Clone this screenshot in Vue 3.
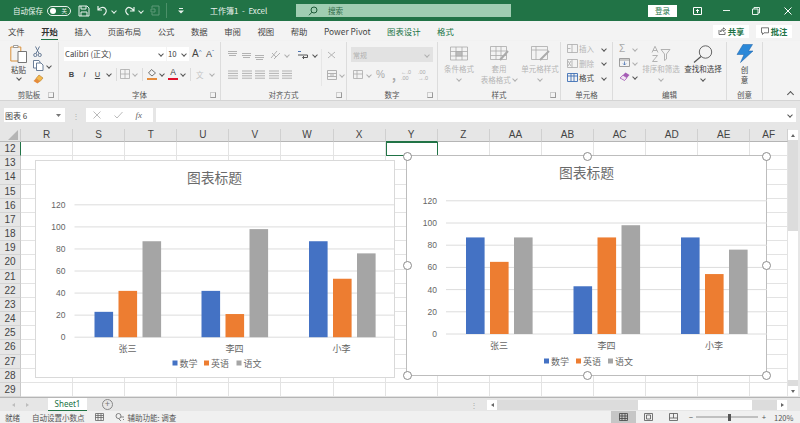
<script setup>
const colNames = ['R', 'S', 'T', 'U', 'V', 'W', 'X', 'Y', 'Z', 'AA', 'AB', 'AC', 'AD', 'AE', 'AF']
const rowNums = Array.from({ length: 18 }, (_, i) => i + 12)

const tabs = [
  { text: '文件' }, { text: '开始', active: true }, { text: '插入' }, { text: '页面布局' }, { text: '公式' },
  { text: '数据' }, { text: '审阅' }, { text: '视图' }, { text: '帮助' }, { text: 'Power Pivot' },
  { text: '图表设计', ctx: true }, { text: '格式', ctx: true },
]

const seriesColors = ['#4472c4', '#ed7d31', '#a5a5a5']
const legendNames = ['数学', '英语', '语文']
const cats = ['张三', '李四', '小李']

const charts = [
  {
    id: 'a', x: 34.5, y: 159.5, w: 360.5, h: 218.5, selected: false,
    titleX: 214, titleY: 182, gridL: 74, gridR: 394, base: 336.7, scale: 1.103, labelX: 65,
    groups: [94, 201, 308.5], catX: [127, 234, 341], catY: 351, legY: 366, legX: [172, 203.5, 236],
    values: [[23, 42, 87], [42, 21, 98], [87, 53, 76]],
  },
  {
    id: 'b', x: 406, y: 154.5, w: 361, h: 221, selected: true,
    titleX: 586.5, titleY: 177, gridL: 446, gridR: 767, base: 333.5, scale: 1.11, labelX: 437,
    groups: [466, 573.5, 681], catX: [499, 606.5, 714], catY: 348.5, legY: 364, legX: [544, 576, 608],
    values: [[87, 65, 87], [43, 87, 98], [87, 54, 76]],
  },
]

const ticks = [0, 20, 40, 60, 80, 100, 120]
const handles = [
  [0, 0], [50, 0], [100, 0], [0, 50], [100, 50], [0, 100], [50, 100], [100, 100],
]
</script>

<template>
  <div class="app">
    <!-- 标题栏 -->
    <header class="titlebar">
      <span class="t-autosave">自动保存</span>
      <span class="toggle"><i class="toggle-dot"></i><b>关</b></span>
      <svg class="t-save" width="12" height="12" viewBox="0 0 12 12" fill="none" stroke="#e8f2ec" stroke-width="1"><path d="M1 1h8l2 2v8H1z" /><path d="M3 1v3h5V1M3 11V7h6v4" /></svg>
      <svg class="t-undo" width="11" height="11" viewBox="0 0 11 11" fill="none" stroke="#e8f2ec" stroke-width="1.2"><path d="M1 1v4h4M1.2 5C3 2.5 6 1.5 8 3.2c2.2 2 1.5 5-1.5 7" /></svg>
      <i class="chev light t-c1"></i>
      <svg class="t-redo" width="11" height="11" viewBox="0 0 11 11" fill="none" stroke="#e8f2ec" stroke-width="1.2"><path d="M10 2v4H6M9.8 6C8 3 5 1.5 3 3.2.8 5.2 1.5 8 4.5 10" /></svg>
      <i class="chev light t-c2"></i>
      <svg class="t-form" width="10" height="11" viewBox="0 0 10 11" fill="none" stroke="#5f9a79" stroke-width="1"><path d="M2 3V1h7v9H2V8M1 4h4v3H1z" /></svg>
      <i class="t-sep"></i>
      <svg class="t-more" width="6" height="6" viewBox="0 0 6 6" fill="#e8f2ec"><path d="M1 0h4v1H1zM0 2.500h6L3 5.500z" /></svg>
      <span class="t-title">工作簿1 &nbsp;-&nbsp; Excel</span>
      <div class="t-search">
        <svg width="10" height="10" viewBox="0 0 10 10" fill="none" stroke="#1d5a38" stroke-width="1"><circle cx="6" cy="4" r="3" /><path d="M4 6.200 1 9.200" /></svg>
        <span>搜索</span>
      </div>
      <button class="t-login">登录</button>
      <svg class="t-win w1" width="9" height="8" viewBox="0 0 9 8" fill="none" stroke="#fff"><path d="M.5.500h8v7h-8zM4.500 6V2.500M3 4l1.500-1.500L6 4" /></svg>
      <i class="t-min"></i>
      <svg class="t-win w3" width="8" height="8" viewBox="0 0 8 8" fill="none" stroke="#e8f2ec"><path d="M.5 2h5.500v5.500H.5zM2 2V.5h5.500V6H6" /></svg>
      <svg class="t-win w4" width="8" height="8" viewBox="0 0 8 8" fill="none" stroke="#fff"><path d="M.5.500l7 7M7.500.500l-7 7" /></svg>
    </header>

    <!-- 选项卡 -->
    <nav class="tabs">
      <span v-for="t in tabs" :key="t.text" class="tab" :class="{ active: t.active, ctx: t.ctx }">{{ t.text }}</span>
      <span class="tab-right">
        <button class="pill">
          <svg width="8" height="8" viewBox="0 0 8 8" fill="none" stroke="#555" stroke-width=".8"><path d="M1 3v4.500h6V5M2.500 5c0-2 1.500-3 3-3V.8L7.700 2.700 5.500 4.500V3.300C4 3.300 3.200 4 2.500 5z" /></svg>
          共享
        </button>
        <button class="pill">
          <svg width="8" height="8" viewBox="0 0 8 8" fill="none" stroke="#555" stroke-width=".8"><path d="M.5.800h7v5H3L1.500 7.500V5.800h-1z" /></svg>
          批注
        </button>
      </span>
    </nav>

    <!-- 功能区 -->
    <section class="ribbon">
      <div class="group g-clip">
        <div class="g-body clip">
          <div class="paste">
            <svg width="17" height="19" viewBox="0 0 17 19" fill="none">
              <path d="M.8 3h10v14H.8z" stroke="#d9913b" stroke-width="1" />
              <path d="M3.500 3.500V1.500H8v2z" stroke="#888" fill="#fff" stroke-width=".8" />
              <path d="M8 7.500h8.500v11H8z" stroke="#666" fill="#fff" stroke-width=".9" />
            </svg>
            <span>粘贴</span>
            <i class="chev"></i>
          </div>
          <div class="clip-side">
            <svg width="9" height="11" viewBox="0 0 9 11" fill="none" stroke="#5a6f8c" stroke-width=".9"><path d="M2.500.500l3.500 7M6.500.500 3 7.500" /><circle cx="2.300" cy="9" r="1.600" /><circle cx="6.700" cy="9" r="1.600" /></svg>
            <span class="ic-row">
              <svg width="11" height="11" viewBox="0 0 11 11" fill="none" stroke="#5a6f8c" stroke-width=".9"><path d="M.5.500h5.500l1 1.500v6H.5z" fill="#fff" /><path d="M3.500 3h4.500l2 2v5.500H3.500z" fill="#fff" /></svg>
              <i class="chev"></i>
            </span>
            <svg width="11" height="10" viewBox="0 0 11 10"><path d="M6 1l4 3-3 3.500-4-3z" fill="#f4b84a" stroke="#b2772a" stroke-width=".6" /><path d="M3 4.500 7 7.500 4.500 9.500.5 7z" fill="#e58b3a" /></svg>
          </div>
        </div>
        <div class="g-label"><span></span><span>剪贴板</span><i class="launch"></i></div>
      </div>

      <div class="group g-font">
        <div class="g-body font">
          <div class="font-row">
            <div class="sel sel-font"><span>Calibri (正文)</span><i class="chev"></i></div>
            <div class="sel sel-size"><span>10</span><i class="chev"></i></div>
            <span class="grow">A<sup>^</sup></span>
            <span class="grow small">A<sup>ˇ</sup></span>
          </div>
          <div class="font-row fr2">
            <b class="fmt">B</b><i class="fmt it">I</i><u class="fmt">U</u><i class="chev"></i>
            <i class="vsep"></i>
            <svg width="10" height="10" viewBox="0 0 10 10" fill="none" stroke="#aaa" stroke-width=".8"><path d="M.5.500h9v9h-9zM5 .5v9M.5 5h9" /></svg>
            <i class="chev gray"></i>
            <i class="vsep"></i>
            <span class="colorbtn">
              <svg width="10" height="8" viewBox="0 0 10 8" fill="none" stroke="#666" stroke-width=".9"><path d="M4.500.500 8.500 4 5 7 1.500 4z" /></svg>
              <i class="bar orange"></i>
            </span>
            <i class="chev"></i>
            <span class="colorbtn"><span class="colorA">A</span><i class="bar red"></i></span>
            <i class="chev"></i>
            <i class="vsep"></i>
            <span class="wen">文</span>
            <i class="chev gray"></i>
          </div>
        </div>
        <div class="g-label"><span></span><span>字体</span><i class="launch"></i></div>
      </div>

      <div class="group g-align">
        <div class="g-body align">
          <div class="al-main">
            <div class="al-row">
              <svg v-for="v in [0, 2, 4]" :key="v" width="9" height="10" viewBox="0 0 9 10" stroke="#aaa" stroke-width=".9"><path :d="`M0 ${v + 1.500}h9M0 ${v + 3.500}h9M1 ${v + 5.500}h7`" /></svg>
              <svg class="orient" width="11" height="10" viewBox="0 0 11 10" fill="none" stroke="#aaa" stroke-width=".9"><path d="M1 8 7 1M4 9l6-6M2 3l4 4" /></svg>
              <i class="chev gray"></i>
              <svg class="wrap" width="11" height="10" viewBox="0 0 11 10" fill="none" stroke-width="1"><path d="M0 1.500h3" stroke="#4a74b4" /><path d="M0 5h9.500v2.500H5" stroke="#555" /><path d="M6 6 4.500 7.500 6 9" stroke="#555" /></svg>
              <i class="chev"></i>
            </div>
            <div class="al-row r2">
              <svg v-for="v in 5" :key="v" width="10" height="9" viewBox="0 0 10 9" stroke="#aaa" stroke-width=".9"><path d="M0 1h10M0 3.400h10M0 5.800h10M0 8.200h10" /></svg>
            </div>
          </div>
          <div class="al-side">
            <svg width="9" height="10" viewBox="0 0 9 10" fill="none" stroke="#b5b5b5"><path d="M1 2 8 8M8 2 1 8" /></svg>
            <span class="ic-row">
              <svg width="10" height="10" viewBox="0 0 10 10" fill="none" stroke="#aaa" stroke-width=".9"><path d="M.5.500h9v9h-9zM.5 3.500h9M.5 6.500h9M3 5h4" /></svg>
              <i class="chev gray"></i>
            </span>
          </div>
        </div>
        <div class="g-label"><span></span><span>对齐方式</span><i class="launch"></i></div>
      </div>

      <div class="group g-num">
        <div class="g-body num">
          <div class="num-sel"><span>常规</span><i class="chev gray"></i></div>
          <div class="num-row">
            <svg width="10" height="9" viewBox="0 0 10 9" fill="none" stroke="#aaa" stroke-width=".8"><path d="M.5.500h9v8h-9zM.5 4h9M4 .5v8" /></svg>
            <i class="chev gray"></i>
            <span class="pct">%</span>
            <span class="comma">,</span>
            <span class="dec">←.0<br />.00</span>
            <span class="dec">.00<br />→.0</span>
          </div>
        </div>
        <div class="g-label"><span></span><span>数字</span><i class="launch"></i></div>
      </div>

      <div class="group g-style">
        <div class="g-body styles">
          <div class="big dis w-a">
            <svg width="18" height="14" viewBox="0 0 18 14" fill="none" stroke="#aaa" stroke-width=".8"><path d="M.5.500h17v13H.5zM.5 5h17M.5 9.500h17M6 .5v13M12 .5v13" /><path d="M6 5h6v4.500H6z" fill="#bbb" /></svg>
            <span>条件格式</span><i class="chev gray"></i>
          </div>
          <div class="big dis w-b">
            <svg width="19" height="15" viewBox="0 0 19 15" fill="none" stroke="#aaa" stroke-width=".8"><path d="M.5.500h16v13H.5zM.5 5h16M.5 9.500h16M6 .5v13M11 .5v13" /><path d="M10 14 18 5" stroke-width="2" /></svg>
            <span>套用<br />表格格式 <i class="chev gray inl"></i></span>
          </div>
          <div class="big dis w-c">
            <svg width="19" height="15" viewBox="0 0 19 15" fill="none" stroke="#aaa" stroke-width=".8"><path d="M.5.500h16v13H.5zM.5 4h16M5 .5v13" /><path d="M9 14 18 5" stroke-width="2" /></svg>
            <span>单元格样式</span><i class="chev gray"></i>
          </div>
        </div>
        <div class="g-label"><span></span><span>样式</span><i class="launch"></i></div>
      </div>

      <div class="group g-cell">
        <div class="g-body cells">
          <div class="cell-row dis">
            <svg width="11" height="9" viewBox="0 0 11 9" fill="none" stroke="#aaa" stroke-width=".8"><path d="M.5.500h10v8H.5zM5 .5v8M3.500 4.500 1 4.500" /></svg>
            <span>插入</span><i class="chev"></i>
          </div>
          <div class="cell-row dis">
            <svg width="11" height="9" viewBox="0 0 11 9" fill="none" stroke="#aaa" stroke-width=".8"><path d="M.5.500h10v8H.5zM5 .5v8M1 2l3 5M4 2 1 7" /></svg>
            <span>删除</span><i class="chev"></i>
          </div>
          <div class="cell-row">
            <svg width="11" height="9" viewBox="0 0 11 9" fill="none" stroke="#3e6fb5" stroke-width=".9"><path d="M.5.500h10v8H.5zM.5 3h10M4 .5v8M7 .5v8" /></svg>
            <span>格式</span><i class="chev"></i>
          </div>
        </div>
        <div class="g-label one"><span>单元格</span></div>
      </div>

      <div class="group g-edit">
        <div class="g-body edit">
          <div class="edit-side">
            <span class="ic-row"><span class="sigma">Σ</span><i class="chev gray"></i></span>
            <span class="ic-row">
              <svg width="11" height="9" viewBox="0 0 11 9" fill="none" stroke="#888" stroke-width=".8"><path d="M.5.500h10v8H.5zM.5 2h10" /><path d="M5.500 3.500v3.500M4 5.500 5.500 7 7 5.500" stroke="#4a74b4" /></svg>
              <i class="chev gray"></i>
            </span>
            <span class="ic-row">
              <svg width="11" height="9" viewBox="0 0 11 9"><path d="M6.500.500 10.500 3 5.500 8.500 1 6z" fill="#a55cb5" /><path d="M4 3.200 8 5.800 5.500 8.500 1 6z" fill="#f0e4f2" stroke="#a55cb5" stroke-width=".7" /></svg>
              <i class="chev"></i>
            </span>
          </div>
          <div class="big dis w-d">
            <svg width="20" height="17" viewBox="0 0 20 17" fill="none" stroke="#aaa" stroke-width=".9"><path d="M1 7 4 .8 7 7M2 5h4M1.500 10h5L1.500 16h5M10 4h9l-3.500 4.500v5l-2 1.500V8.500z" /></svg>
            <span>排序和筛选</span><i class="chev gray"></i>
          </div>
          <div class="big w-e">
            <svg width="20" height="18" viewBox="0 0 20 18" fill="none" stroke="#555" stroke-width=".9"><circle cx="12.500" cy="7" r="6.200" /><path d="M8 11.500 1 17.500" stroke-width="1.200" /></svg>
            <span>查找和选择</span><i class="chev"></i>
          </div>
        </div>
        <div class="g-label one"><span>编辑</span></div>
      </div>

      <div class="group g-idea">
        <div class="g-body idea">
          <svg width="18" height="19" viewBox="0 0 18 19"><path d="M7 .5h9.500L12.500 7H17L4.500 18.500 8 10.500H1z" fill="#2b88d8" stroke="#1a5fa5" stroke-width=".5" /></svg>
          <span>创<br />意</span>
        </div>
        <div class="g-label one"><span>创意</span></div>
      </div>
      <div class="ribbon-end"><i class="chev up"></i></div>
    </section>

    <!-- 编辑栏 -->
    <section class="formula">
      <div class="namebox"><span>图表 6</span><svg width="5" height="3" viewBox="0 0 5 3" fill="#777"><path d="M0 0h5L2.500 3z" /></svg></div>
      <span class="f-dots">⋮</span>
      <div class="f-btns">
        <svg width="8" height="8" viewBox="0 0 8 8" stroke="#bbb" stroke-width="1"><path d="M.5.500l7 7M7.500.500l-7 7" /></svg>
        <svg width="9" height="8" viewBox="0 0 9 8" fill="none" stroke="#bbb" stroke-width="1"><path d="M.5 4.500 3 7 8.500 1" /></svg>
        <span class="fx">fx</span>
      </div>
      <div class="f-input"><i class="chev"></i></div>
    </section>

    <!-- 工作表 -->
    <section class="sheet-wrap">
      <div class="sheet">
        <div class="corner"><i class="corner-tri"></i></div>
        <div v-for="c in colNames" :key="c" class="col-h" :class="{ picked: c === 'Y' }">{{ c }}</div>
        <template v-for="r in rowNums" :key="r">
          <div class="row-h" :class="{ picked: r === 12 }">{{ r }}</div>
          <div v-for="c in colNames" :key="c" class="cell" :class="{ cur: r === 12 && c === 'Y' }"></div>
        </template>

        <div
          v-for="ch in charts"
          :key="ch.id"
          class="chart"
          :class="{ selected: ch.selected }"
          :style="{ left: ch.x + 'px', top: ch.y - 129 + 'px', width: ch.w + 'px', height: ch.h + 'px' }"
        >
          <svg :width="ch.w" :height="ch.h" :viewBox="`${ch.x} ${ch.y} ${ch.w} ${ch.h}`" class="chart-svg">
            <text :x="ch.titleX" :y="ch.titleY" text-anchor="middle" class="c-title">图表标题</text>
            <g v-for="t in ticks" :key="t">
              <line :x1="ch.gridL" :x2="ch.gridR" :y1="ch.base - t * ch.scale" :y2="ch.base - t * ch.scale" stroke="#dcdcdc" stroke-width="1" />
              <text :x="ch.labelX" :y="ch.base - t * ch.scale + 3" text-anchor="end" class="c-axis">{{ t }}</text>
            </g>
            <g v-for="(vals, gi) in ch.values" :key="gi">
              <rect
                v-for="(v, si) in vals"
                :key="si"
                :x="ch.groups[gi] + si * 24"
                :y="ch.base - v * ch.scale"
                width="18.600"
                :height="v * ch.scale"
                :fill="seriesColors[si]"
              />
              <text :x="ch.catX[gi]" :y="ch.catY" text-anchor="middle" class="c-cat">{{ cats[gi] }}</text>
            </g>
            <g v-for="(n, i) in legendNames" :key="n">
              <rect :x="ch.legX[i]" :y="ch.legY - 6" width="5" height="5" :fill="seriesColors[i]" />
              <text :x="ch.legX[i] + 7" :y="ch.legY" class="c-cat">{{ n }}</text>
            </g>
          </svg>
          <template v-if="ch.selected">
            <i
              v-for="h in handles"
              :key="h.join()"
              class="handle"
              :style="{ left: h[0] + '%', top: h[1] + '%' }"
            ></i>
          </template>
        </div>
      </div>
      <aside class="vscroll">
        <button class="sb-btn"><i class="tri t-up"></i></button>
        <div class="vtrack"><div class="vthumb"></div></div>
        <button class="sb-btn"><i class="tri t-down"></i></button>
      </aside>
    </section>

    <!-- 工作表标签 -->
    <section class="sheetbar">
      <span class="nav-arrows"><i class="tri t-left dim"></i><i class="tri t-right dim"></i></span>
      <span class="sheet-tab">Sheet1</span>
      <span class="add-sheet">+</span>
      <span class="h-dots">⋮</span>
      <div class="hscroll">
        <button class="sb-btn"><i class="tri t-left"></i></button>
        <div class="htrack"><div class="hthumb"></div></div>
        <button class="sb-btn"><i class="tri t-right"></i></button>
      </div>
    </section>

    <!-- 状态栏 -->
    <footer class="status">
      <span>就绪</span>
      <span class="s-auto">自动设置小数点</span>
      <svg class="s-ic" width="9" height="8" viewBox="0 0 9 8" fill="none" stroke="#666" stroke-width=".8"><path d="M.5.500h8v7h-8zM.5 2.500h8M.5 4.500h8M3 .5v7M6 .5v7" /></svg>
      <svg class="s-ic2" width="10" height="9" viewBox="0 0 10 9" fill="none" stroke="#666" stroke-width=".8"><circle cx="3.500" cy="3" r="2.500" /><path d="M3.500 5.500 6 8M6 4h3M8 6l1 1" /></svg>
      <span class="s-a11y">辅助功能: 调查</span>
      <span class="s-right">
        <span class="view on"><svg width="9" height="8" viewBox="0 0 9 8" fill="none" stroke="#444" stroke-width=".8"><path d="M.5.500h8v7h-8zM.5 3h8M.5 5.500h8M3 .5v7M6 .5v7" /></svg></span>
        <span class="view"><svg width="9" height="8" viewBox="0 0 9 8" fill="none" stroke="#555" stroke-width=".8"><path d="M.5.500h8v7h-8zM2.500 2h4v4h-4z" /></svg></span>
        <span class="view"><svg width="9" height="8" viewBox="0 0 9 8" fill="none" stroke="#555" stroke-width=".8"><path d="M.5.500h8v7h-8zM.5 5h8M4.500.5V5" /></svg></span>
        <span class="z-btn">−</span>
        <span class="slider"><i class="knob"></i></span>
        <span class="z-btn">+</span>
        <span class="z-val">120%</span>
      </span>
    </footer>
  </div>
</template>

<style scoped>
.app {
  width: 800px;
  height: 423px;
  display: flex;
  flex-direction: column;
  overflow: hidden;
  background: #e6e6e6;
  font-family: "Noto Sans CJK SC", "Liberation Sans", sans-serif;
  color: #444;
}

i {
  font-style: normal;
  display: block;
}

button {
  border: none;
  font-family: inherit;
  padding: 0;
}

.chev {
  width: 3px;
  height: 3px;
  flex-shrink: 0;
  border-right: 1px solid #555;
  border-bottom: 1px solid #555;
  transform: rotate(45deg);
}

.chev.gray {
  border-color: #b0b0b0;
}

.chev.light {
  border-color: #e8f2ec;
}

.chev.inl {
  display: inline-block;
  margin-left: 1px;
  vertical-align: 2px;
}

.chev.up {
  transform: rotate(225deg);
  width: 4px;
  height: 4px;
}

/* 标题栏 */
.titlebar {
  height: 21px;
  flex-shrink: 0;
  background: #217346;
  display: flex;
  align-items: center;
  padding-left: 13px;
  color: #e8f2ec;
  font-size: 7.500px;
}

.t-autosave {
  width: 30px;
  white-space: nowrap;
}

.toggle {
  width: 24px;
  height: 10px;
  margin-left: 4px;
  border: 1px solid #e8f2ec;
  border-radius: 6px;
  display: flex;
  align-items: center;
  justify-content: space-between;
  padding: 0 3px 0 2px;
  box-sizing: border-box;
}

.toggle-dot {
  width: 6px;
  height: 6px;
  background: #fff;
  border-radius: 50%;
}

.toggle b {
  font-weight: 400;
  font-size: 5.500px;
}

.t-save { margin-left: 7px; }
.t-undo { margin-left: 7px; }
.t-c1 { margin-left: 4px; }
.t-redo { margin-left: 8px; }
.t-c2 { margin-left: 4px; }
.t-form { margin-left: 7px; }

.t-sep {
  width: 1px;
  height: 15px;
  background: #4c9069;
  margin-left: 6px;
}

.t-more { margin-left: 11px; }

.t-title {
  margin-left: 26px;
  width: 86px;
  font-size: 8px;
  white-space: nowrap;
}

.t-search {
  width: 215px;
  height: 13px;
  background: #a0cdb2;
  display: flex;
  align-items: center;
  padding-left: 12px;
  box-sizing: border-box;
  gap: 10px;
  color: #2c6a47;
}

.t-login {
  margin-left: 137px;
  width: 29px;
  height: 12px;
  background: #fff;
  color: #217346;
  font-size: 7.500px;
  line-height: 12px;
}

.t-win.w1 { margin-left: 16px; }

.t-min {
  width: 7px;
  height: 1px;
  background: #e8f2ec;
  margin-left: 21px;
}

.t-win.w3 { margin-left: 22px; }
.t-win.w4 { margin-left: 24px; }

/* 选项卡 */
.tabs {
  height: 20px;
  flex-shrink: 0;
  background: #f3f3f3;
  display: flex;
  align-items: center;
  gap: 16.500px;
  padding-left: 8px;
  font-size: 8.400px;
}

.tab {
  position: relative;
  white-space: nowrap;
  color: #444;
}

.tab.active {
  font-weight: 700;
  color: #333;
}

.tab.active::after {
  content: "";
  position: absolute;
  left: 0;
  right: 0;
  bottom: -3px;
  height: 1.500px;
  background: #217346;
}

.tab.ctx {
  color: #217346;
}

.tab-right {
  margin-left: auto;
  display: flex;
  gap: 7px;
  padding-right: 8px;
}

.pill {
  width: 36px;
  height: 13px;
  background: #fff;
  color: #217346;
  font-size: 8.400px;
  font-weight: 700;
  display: flex;
  align-items: center;
  justify-content: center;
  gap: 2px;
}

/* 功能区 */
.ribbon {
  height: 60px;
  flex-shrink: 0;
  background: #f3f3f3;
  border-bottom: 1px solid #d4d4d4;
  box-sizing: border-box;
  display: flex;
  box-shadow: 0 1px 2px #d8d8d8;
  font-size: 7.500px;
}

.group {
  display: flex;
  flex-direction: column;
  border-right: 1px solid #dcdcdc;
  margin-top: 1px;
  box-sizing: border-box;
}

.g-clip { width: 59px; }
.g-font { width: 162px; }
.g-align { width: 126px; }
.g-num { width: 91px; }
.g-style { width: 123px; }
.g-cell { width: 52px; }
.g-edit { width: 114px; }
.g-idea { width: 36px; }

.g-body {
  flex: 1;
  min-height: 0;
}

.g-label {
  height: 11px;
  display: grid;
  grid-template-columns: 1fr auto 1fr;
  align-items: center;
  color: #555;
  line-height: 11px;
}

.g-label.one {
  display: flex;
  justify-content: center;
}

.launch {
  justify-self: end;
  margin-right: 4px;
  width: 4px;
  height: 4px;
  border: 1px solid #999;
  border-top-color: #ccc;
  border-left-color: #ccc;
}

.ic-row {
  display: flex;
  align-items: center;
  gap: 3px;
}

.clip {
  display: flex;
  padding: 2px 0 0 10px;
  gap: 6px;
}

.paste {
  display: flex;
  flex-direction: column;
  align-items: center;
  gap: 1px;
  font-size: 7.500px;
}

.clip-side {
  display: flex;
  flex-direction: column;
  gap: 3px;
  padding-top: 2px;
}

.font {
  padding: 5px 0 0 5px;
}

.font-row {
  display: flex;
  align-items: center;
  height: 14px;
}

.sel {
  height: 14px;
  background: #fff;
  display: flex;
  align-items: center;
  justify-content: space-between;
  box-sizing: border-box;
  padding: 0 3px 1px 1px;
  font-size: 7.800px;
}

.sel-font {
  width: 102px;
  margin-right: 1px;
}

.sel-size {
  width: 22px;
}

.grow {
  margin-left: 3px;
  width: 12px;
  font-size: 10px;
  line-height: 14px;
  font-family: "Liberation Sans", sans-serif;
  white-space: nowrap;
}

.grow.small {
  margin-left: 2px;
  font-size: 9px;
}

.grow sup {
  font-size: 6px;
  color: #4a74b4;
  vertical-align: 3px;
  line-height: 0;
}

.fr2 {
  margin-top: 6px;
  padding-left: 1px;
  gap: 0;
  color: #444;
}

.fmt {
  width: 13px;
  text-align: center;
  font-size: 7.500px;
  font-family: "Liberation Sans", sans-serif;
}

.it {
  font-style: italic;
  display: inline;
}

.fr2 .chev {
  margin: 0 3px;
}

.vsep {
  width: 1px;
  height: 13px;
  background: #dcdcdc;
  margin: 0 3px 0 2px;
}

.colorbtn {
  width: 10px;
  display: flex;
  flex-direction: column;
  align-items: center;
  margin-left: 1px;
}

.colorA {
  font-size: 8.500px;
  line-height: 9px;
  font-family: "Liberation Sans", sans-serif;
  color: #444;
}

.bar {
  width: 10px;
  height: 2px;
  margin-top: 1px;
}

.bar.orange { background: #e58b3a; }
.bar.red { background: #e0112b; }

.wen {
  color: #c4c4c4;
  font-size: 7.500px;
  margin-left: 2px;
  width: 11px;
}

.align {
  display: flex;
  padding: 7px 0 0 7px;
}

.al-main {
  width: 93px;
}

.al-row {
  display: flex;
  align-items: center;
  gap: 4.500px;
  height: 11px;
}

.al-row.r2 {
  margin-top: 9px;
  gap: 3.500px;
}

.orient {
  margin-left: 1px;
}

.wrap {
  margin-left: 4px;
}

.al-side {
  display: flex;
  flex-direction: column;
  gap: 10px;
  padding-top: 1px;
  padding-left: 5px;
  height: 36px;
  border-left: 1px solid #e6e6e6;
}

.num {
  padding: 5px 0 0 4px;
}

.num-sel {
  width: 82px;
  height: 15px;
  background: #e2e2e2;
  color: #b0b0b0;
  display: flex;
  align-items: center;
  justify-content: space-between;
  padding: 0 4px 0 2px;
  box-sizing: border-box;
  font-size: 7px;
}

.num-row {
  display: flex;
  align-items: center;
  height: 13px;
  margin-top: 6px;
  padding-left: 2px;
  color: #aaa;
}

.num-row .chev {
  margin: 0 5px 0 4px;
}

.pct {
  font-size: 10px;
  font-family: "Liberation Sans", sans-serif;
  width: 16px;
}

.comma {
  font-size: 12px;
  font-weight: 700;
  width: 9px;
  line-height: 8px;
}

.dec {
  font-size: 5.500px;
  line-height: 6px;
  width: 17px;
  font-family: "Liberation Sans", sans-serif;
  white-space: nowrap;
}

.styles {
  display: flex;
  padding-top: 4px;
  padding-left: 3px;
}

.big {
  display: flex;
  flex-direction: column;
  align-items: center;
  text-align: center;
  line-height: 10px;
  white-space: nowrap;
}

.big svg {
  height: 15px;
  margin-bottom: 3px;
}

.big .chev {
  margin-top: 3px;
}

.dis {
  color: #b5b5b5;
}

.w-a { width: 36px; }
.w-b { width: 44px; }
.w-c { width: 38px; }
.w-d { width: 38px; }
.w-e { width: 40px; margin-left: 3px; color: #444; }

.cells {
  display: flex;
  flex-direction: column;
  gap: 3.500px;
  padding: 1px 0 0 6px;
}

.cell-row {
  display: flex;
  align-items: center;
  gap: 1px;
  height: 11px;
  color: #444;
}

.cell-row.dis {
  color: #b5b5b5;
}

.cell-row .chev {
  margin-left: 7px;
}

.edit {
  display: flex;
  padding: 1px 0 0 6px;
}

.edit-side {
  width: 23px;
  display: flex;
  flex-direction: column;
  gap: 3px;
}

.edit-side .ic-row {
  height: 11px;
}

.sigma {
  font-size: 10px;
  width: 11px;
  color: #aaa;
  font-family: "Liberation Sans", sans-serif;
}

.w-d,
.w-e {
  padding-top: 2px;
}

.w-d svg,
.w-e svg {
  height: 18px;
  margin-bottom: 1px;
}

.idea {
  display: flex;
  flex-direction: column;
  align-items: center;
  padding-top: 2px;
  text-align: center;
  line-height: 10px;
  gap: 2px;
}

.ribbon-end {
  flex: 1;
  display: flex;
  align-items: flex-end;
  justify-content: flex-end;
  padding: 0 7px 3px 0;
}

/* 编辑栏 */
.formula {
  height: 28px;
  flex-shrink: 0;
  display: flex;
  align-items: center;
  padding: 0 4px 0 4px;
  box-sizing: border-box;
  background: #e6e6e6;
}

.namebox {
  width: 61px;
  height: 14px;
  background: #fff;
  display: flex;
  align-items: center;
  justify-content: space-between;
  padding: 0 4px 0 1px;
  box-sizing: border-box;
  font-size: 8px;
}

.f-dots {
  width: 21px;
  text-align: center;
  color: #b0b0b0;
  font-size: 8px;
}

.f-btns {
  width: 67px;
  height: 14px;
  background: #fff;
  display: flex;
  align-items: center;
  justify-content: space-between;
  padding: 0 11px 0 7px;
  box-sizing: border-box;
}

.fx {
  font-family: "Liberation Serif", serif;
  font-style: italic;
  font-size: 9px;
  color: #666;
}

.f-input {
  flex: 1;
  height: 14px;
  background: #fff;
  margin-left: 3px;
  display: flex;
  align-items: center;
  justify-content: flex-end;
  padding-right: 4px;
}

/* 工作表 */
.sheet-wrap {
  height: 268px;
  flex-shrink: 0;
  display: flex;
}

.sheet {
  position: relative;
  width: 788px;
  overflow: hidden;
  display: grid;
  grid-template-columns: 21px repeat(14, 52.100px) 1fr;
  grid-template-rows: 13px repeat(18, minmax(0, 1fr));
  background: #fff;
}

.corner {
  background: #e6e6e6;
  border-right: 1px solid #ccc;
  border-bottom: 1px solid #bbb;
  display: flex;
  justify-content: flex-end;
  align-items: flex-end;
  padding: 0 2px 1px 0;
  box-sizing: border-box;
}

.corner-tri {
  width: 0;
  height: 0;
  border-left: 10px solid transparent;
  border-bottom: 10px solid #b5b5b5;
}

.col-h {
  background: #e6e6e6;
  border-right: 1px solid #d0d0d0;
  border-bottom: 1px solid #b5b5b5;
  box-sizing: border-box;
  text-align: center;
  font-size: 10px;
  line-height: 12px;
  color: #444;
  font-family: "Liberation Sans", sans-serif;
}

.col-h.picked {
  border-bottom: 1px solid #217346;
}

.row-h {
  background: #e6e6e6;
  border-right: 1px solid #c8c8c8;
  border-bottom: 1px solid #d4d4d4;
  box-sizing: border-box;
  text-align: center;
  font-size: 10px;
  line-height: 13px;
  color: #444;
  font-family: "Liberation Sans", sans-serif;
}

.row-h.picked {
  border-right: 1px solid #217346;
}

.cell {
  border-right: 1px solid #e3e3e3;
  border-bottom: 1px solid #e3e3e3;
  box-sizing: border-box;
}

.cell.cur {
  border: 1px solid #217346;
}

.chart {
  position: absolute;
  background: #fff;
  border: 1px solid #d9d9d9;
  box-sizing: border-box;
}

.chart.selected {
  border-color: #bdbdbd;
}

.chart-svg {
  display: block;
  margin: -1px;
}

.c-title {
  font-size: 13.800px;
  fill: #6a6a6a;
}

.c-axis {
  font-size: 8.500px;
  fill: #666;
  font-family: "Liberation Sans", sans-serif;
}

.c-cat {
  font-size: 9px;
  fill: #666;
}

.handle {
  position: absolute;
  width: 7px;
  height: 7px;
  margin: -4px 0 0 -4px;
  background: #fff;
  border: 1px solid #8c8c8c;
  border-radius: 50%;
}

/* 滚动条 */
.tri {
  width: 0;
  height: 0;
  border: 2px solid transparent;
}

.t-up { border-bottom: 3px solid #666; border-top: 0; }
.t-down { border-top: 3px solid #666; border-bottom: 0; }
.t-left { border-right: 3px solid #666; border-left: 0; }
.t-right { border-left: 3px solid #666; border-right: 0; }
.t-left.dim { border-right-color: #bdbdbd; }
.t-right.dim { border-left-color: #bdbdbd; }

.sb-btn {
  width: 10px;
  height: 10px;
  background: #fff;
  display: flex;
  align-items: center;
  justify-content: center;
  flex-shrink: 0;
}

.vscroll {
  width: 12px;
  display: flex;
  flex-direction: column;
  align-items: flex-start;
  padding: 1px 0;
  box-sizing: border-box;
  background: #e6e6e6;
}

.vtrack {
  flex: 1;
  width: 10px;
  background: #dcdcdc;
  padding-top: 91px;
  box-sizing: border-box;
}

.vthumb {
  height: 149px;
  background: #fff;
}

/* 工作表标签 */
.sheetbar {
  height: 14px;
  flex-shrink: 0;
  border-top: 1px solid #b5b5b5;
  box-sizing: border-box;
  background: #e6e6e6;
  display: flex;
  align-items: center;
}

.nav-arrows {
  width: 48px;
  display: flex;
  justify-content: flex-start;
  gap: 11px;
  padding-left: 12px;
  box-sizing: border-box;
}

.sheet-tab {
  width: 39px;
  height: 13px;
  background: #fff;
  border-bottom: 1px solid #217346;
  box-sizing: border-box;
  color: #217346;
  text-align: center;
  font-size: 8px;
  line-height: 12px;
  font-family: "Noto Sans", sans-serif;
}

.add-sheet {
  margin-left: 15px;
  width: 9px;
  height: 9px;
  border: 1px solid #888;
  border-radius: 50%;
  color: #777;
  font-size: 9px;
  line-height: 8px;
  text-align: center;
  font-family: "Liberation Sans", sans-serif;
}

.h-dots {
  margin-left: 357px;
  width: 10px;
  color: #aaa;
  font-size: 8px;
  line-height: 12px;
}

.hscroll {
  margin-left: 7px;
  width: 300px;
  height: 10px;
  display: flex;
}

.htrack {
  flex: 1;
  background: #dcdcdc;
  padding-left: 141px;
  box-sizing: border-box;
}

.hthumb {
  width: 114px;
  height: 10px;
  background: #fff;
}

/* 状态栏 */
.status {
  flex: 1;
  background: #f0f0f0;
  display: flex;
  align-items: center;
  padding-left: 5px;
  font-size: 7.500px;
  color: #555;
  white-space: nowrap;
}

.s-auto { margin-left: 12px; }
.s-ic { margin-left: 10px; }
.s-ic2 { margin-left: 11px; }
.s-a11y { margin-left: 3px; }

.s-right {
  margin-left: auto;
  display: flex;
  align-items: center;
  height: 100%;
  padding-right: 5px;
}

.view {
  width: 25px;
  height: 100%;
  display: flex;
  align-items: center;
  justify-content: center;
}

.view.on {
  background: #c6c6c6;
}

.z-btn {
  width: 8px;
  text-align: center;
  font-family: "Liberation Sans", sans-serif;
  margin-left: 1px;
}

.slider {
  width: 62px;
  height: 1.500px;
  background: #c0c0c0;
  margin: 0 1px;
  display: flex;
  align-items: center;
  padding-left: 32px;
  box-sizing: border-box;
}

.knob {
  width: 3px;
  height: 7px;
  background: #555;
  flex-shrink: 0;
}

.z-val {
  margin-left: 6px;
  width: 21px;
}
</style>

<style>
html,
body {
  margin: 0;
  background: #e6e6e6;
}
</style>
